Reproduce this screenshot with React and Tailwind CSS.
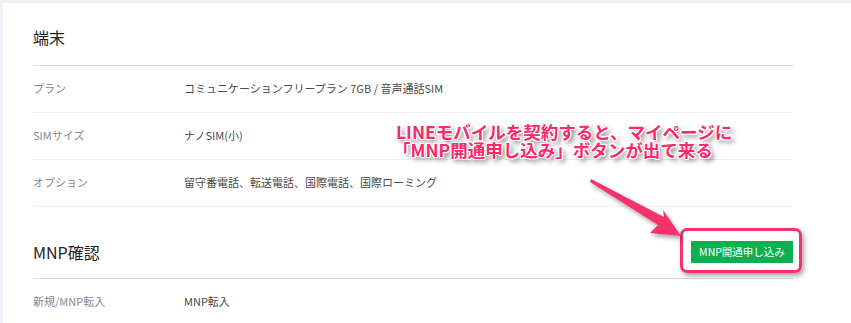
import React from "react";

const rows1 = [
  ["プラン", "コミュニケーションフリープラン 7GB / 音声通話SIM"],
  ["SIMサイズ", "ナノSIM(小)"],
  ["オプション", "留守番電話、転送電話、国際電話、国際ローミング"],
];

function Row({ label, value, last }) {
  return (
    <div className={`flex h-[47px] items-center pb-[2px] ${last ? "" : "border-b border-[#efefef]"}`}>
      <div className="w-[151px] text-[11px] text-[#8a8a8a]">{label}</div>
      <div className="text-[11px] text-[#4a4a4a]">{value}</div>
    </div>
  );
}

export default function App() {
  const font = { fontFamily: '"Noto Sans CJK JP", "Noto Sans", sans-serif' };
  return (
    <div className="relative h-[323px] w-[851px] overflow-hidden bg-[#eef3f8] pl-[3px] pt-[3px]" style={font}>
      <div className="h-full w-full bg-white">
        <div className="ml-[30px] w-[760px]">
          <div className="border-b border-[#d9d9d9] pb-[16px] pt-[22px] text-[16px] leading-[24px] text-[#222]">
            端末
          </div>
          {rows1.map(([l, v]) => (
            <Row key={l} label={l} value={v} />
          ))}
          <div className="flex items-center justify-between border-b border-[#d9d9d9] pb-[15px] pt-[34px]">
            <div className="text-[16px] leading-[22px] text-[#222]">MNP確認</div>
            <div className="relative">
              <span className="absolute bottom-[-10px] left-[-11px] right-[-9px] top-[-13px] rounded-[7px] border-[3px] border-[#f5306b] shadow-[2px_3px_5px_rgba(0,0,0,0.35)]" />
              <button className="relative flex h-[22px] w-[102px] items-center justify-center bg-[#0bb050] text-[10.5px] text-white">
                MNP開通申し込み
              </button>
            </div>
          </div>
          <Row label="新規/MNP転入" value="MNP転入" last />
        </div>
      </div>

      <svg className="pointer-events-none absolute left-0 top-0" width="851" height="323" viewBox="0 0 851 323">
        <defs>
          <filter id="sh" x="-20%" y="-20%" width="140%" height="140%">
            <feDropShadow dx="2" dy="3" stdDeviation="2" floodColor="#000" floodOpacity="0.35" />
          </filter>
        </defs>
        <polygon
          points="591,179 664,217 663,210 681,236 650,233 658,225 590,182"
          fill="#f5306b"
          filter="url(#sh)"
        />
      </svg>

      <div
        className="absolute left-[396px] top-[123px] text-[17.5px] font-bold leading-[18px] text-[#f72a6b] [text-shadow:-1px_-1px_0_#fff,1px_-1px_0_#fff,-1px_1px_0_#fff,1px_1px_0_#fff,0_-1px_0_#fff,0_1px_0_#fff,-1px_0_0_#fff,1px_0_0_#fff,3px_3px_5px_rgba(0,0,0,0.6)]"
      >
        <div>LINEモバイルを契約すると、マイページに</div>
        <div className="ml-[-3px]">「MNP開通申し込み」ボタンが出て来る</div>
      </div>
    </div>
  );
}
